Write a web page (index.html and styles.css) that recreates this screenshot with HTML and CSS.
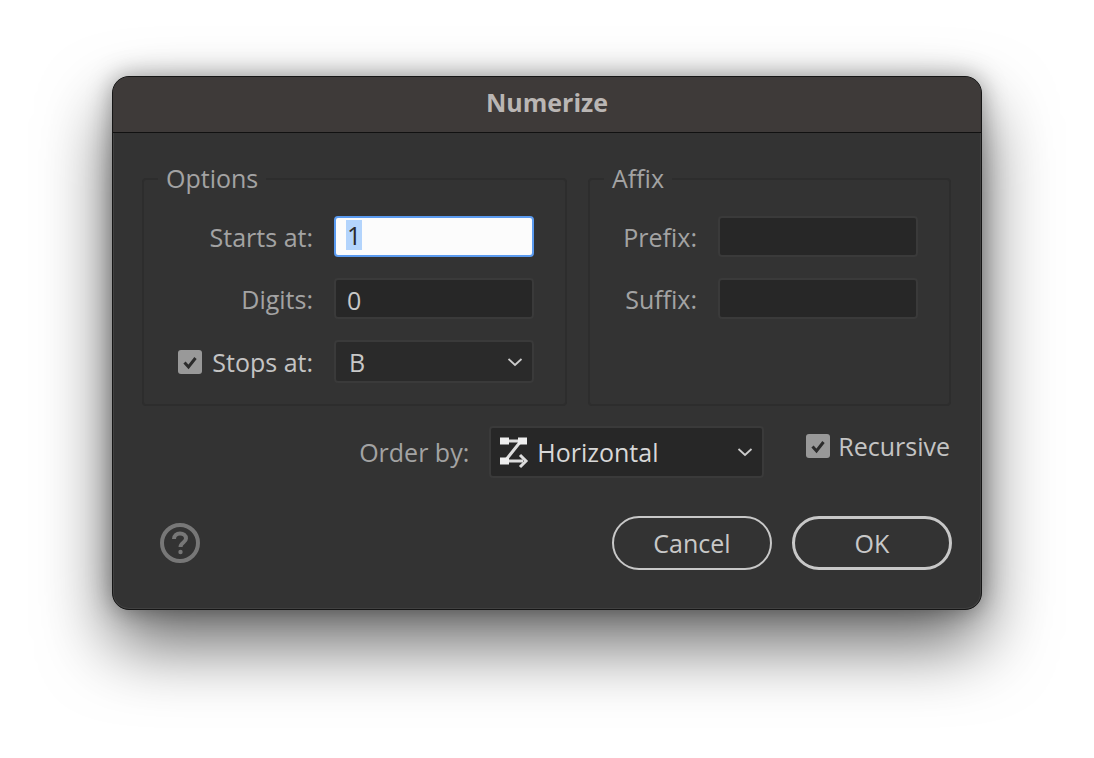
FILE: index.html
```html
<!DOCTYPE html>
<html lang="en">
<head>
    <meta charset="UTF-8">
    <meta name="viewport" content="width=device-width, initial-scale=1.0">
    <title>Numerize</title>
    <link rel="stylesheet" href="styles.css">
</head>
<body>
    <div class="janela">
        <div class="titulo">Numerize</div>
        <div class="corpo">
            <div class="grupos">
                <fieldset class="grupo grupo-opcoes">
                    <legend>Options</legend>
                    <div class="linha">
                        <label>Starts at:</label>
                        <div class="campo campo-ativo"><span class="selecao">1</span></div>
                    </div>
                    <div class="linha">
                        <label>Digits:</label>
                        <div class="campo">0</div>
                    </div>
                    <div class="linha linha-select">
                        <label class="label-check">
                            <svg class="check" viewBox="0 0 24 24"><path d="M6.500 12.500l4 4.500 7-9"/></svg>
                            Stops at:
                        </label>
                        <div class="campo campo-select">
                            <span>B</span>
                            <svg class="seta" viewBox="0 0 16 10"><path d="M1.500 2l6.500 6 6.500-6"/></svg>
                        </div>
                    </div>
                </fieldset>
                <fieldset class="grupo grupo-afixo">
                    <legend>Affix</legend>
                    <div class="linha">
                        <label>Prefix:</label>
                        <div class="campo"></div>
                    </div>
                    <div class="linha">
                        <label>Suffix:</label>
                        <div class="campo"></div>
                    </div>
                </fieldset>
            </div>

            <div class="ordem">
                <label>Order by:</label>
                <div class="campo campo-ordem">
                    <svg class="icone-ordem" viewBox="0 0 30 32">
                        <path class="traco" d="M5 4h20M22 4L6 24h18"/>
                        <path class="traco" d="M21 18l6 6-6 6"/>
                        <rect x="1" y="0.500" width="9" height="7"/>
                        <rect x="19" y="0.500" width="9" height="7"/>
                        <rect x="1" y="20.500" width="9" height="7"/>
                    </svg>
                    <span>Horizontal</span>
                    <svg class="seta" viewBox="0 0 16 10"><path d="M1.500 2l6.500 6 6.500-6"/></svg>
                </div>
                <div class="recursivo">
                    <svg class="check" viewBox="0 0 24 24"><path d="M6.500 12.500l4 4.500 7-9"/></svg>
                    Recursive
                </div>
            </div>

            <div class="rodape">
                <svg class="ajuda" viewBox="0 0 40 40">
                    <circle cx="20" cy="20" r="18"/>
                    <path d="M14 16c0-3.500 2.600-5.500 6-5.500s6 2 6 5c0 4-5.500 4-5.500 8.500"/>
                    <circle class="ponto" cx="20.500" cy="29" r="2.200"/>
                </svg>
                <div class="botoes">
                    <button class="botao">Cancel</button>
                    <button class="botao botao-ok">OK</button>
                </div>
            </div>
        </div>
    </div>
</body>
</html>
```

FILE: styles.css
```css
html,
body {
    height: 100%;
}

body {
    margin: 0;
    background: #fff;
    font-family: "Open Sans", "Noto Sans", sans-serif;
    font-size: 25px;
    color: #a3a3a3;
    overflow: hidden;
}

.janela {
    box-sizing: border-box;
    width: 870px;
    height: 534px;
    margin: 76px 0 0 112px;
    background: #333;
    border: 1px solid #161616;
    border-radius: 17px;
    box-shadow:
        inset 0 0 0 1px rgba(255, 255, 255, 0.07),
        0 34px 70px rgba(0, 0, 0, 0.6),
        0 0 24px rgba(0, 0, 0, 0.35);
    overflow: hidden;
}

.titulo {
    height: 56px;
    box-sizing: border-box;
    background: #3e3a39;
    border-bottom: 1px solid #111;
    color: #bab6b4;
    font-size: 25px;
    font-weight: 700;
    line-height: 50px;
    text-align: center;
}

.corpo {
    padding: 29px 29px 0 29px;
}

.grupos {
    display: flex;
    gap: 21px;
}

.grupo {
    box-sizing: border-box;
    margin: 0;
    height: 244px;
    padding: 20px 31px 0 0;
    border: 2px solid #2d2d2d;
    border-radius: 4px;
    display: flex;
    flex-direction: column;
    gap: 21px;
}

.grupo legend {
    margin-left: 14px;
    padding: 0 8px 2px;
    line-height: 32px;
    color: #a3a3a3;
}

.grupo-opcoes {
    width: 425px;
}

.grupo-afixo {
    width: 363px;
}

.linha {
    display: flex;
    justify-content: flex-end;
    align-items: center;
    gap: 21px;
}

.linha label {
    display: flex;
    align-items: center;
    gap: 10px;
}

.label-check {
    color: #c4c4c4;
}

.campo {
    box-sizing: border-box;
    width: 200px;
    height: 41px;
    padding: 0 11px;
    background: #272727;
    border: 2px solid #3a3a3a;
    border-radius: 4px;
    color: #c8c8c8;
    line-height: 40px;
}

.campo-ativo {
    background: #fcfcfc;
    border-color: #5b9bf0;
    color: #2a2a2a;
}

.selecao {
    display: inline-block;
    height: 30px;
    line-height: 31px;
    vertical-align: 3px;
    padding: 0 1px;
    margin-left: -1px;
    background: #b3d4fc;
}

.campo-select {
    height: 43px;
    display: flex;
    justify-content: space-between;
    align-items: center;
    padding: 0 9px 0 13px;
    background: #2a2a2a;
}

.seta {
    width: 16px;
    height: 10px;
    fill: none;
    stroke: #ccc;
    stroke-width: 1.800;
}

.check {
    width: 24px;
    height: 24px;
    flex: none;
    border-radius: 3px;
    background: #999;
    fill: none;
    stroke: #2c2c2c;
    stroke-width: 3;
}

.ordem {
    display: flex;
    justify-content: flex-end;
    align-items: center;
    margin-top: 20px;
    padding-right: 2px;
}

.campo-ordem {
    display: flex;
    align-items: center;
    gap: 8px;
    width: 275px;
    height: 52px;
    margin-left: 20px;
    padding: 0 9px 0 8px;
    color: #d8d8d8;
}

.campo-ordem .seta {
    margin-left: auto;
}

.icone-ordem {
    width: 30px;
    height: 32px;
    flex: none;
    margin-top: 2px;
    fill: #eee;
}

.traco {
    fill: none;
    stroke: #ddd;
    stroke-width: 3;
}

.recursivo {
    display: flex;
    align-items: center;
    gap: 8px;
    margin-left: 42px;
    margin-top: -12px;
    color: #c4c4c4;
}

.rodape {
    display: flex;
    justify-content: space-between;
    align-items: center;
    margin-top: 38px;
    padding-left: 18px;
}

.ajuda {
    width: 40px;
    height: 40px;
    fill: none;
    stroke: #777;
    stroke-width: 4;
}

.ajuda .ponto {
    fill: #777;
    stroke: none;
}

.botoes {
    display: flex;
    gap: 20px;
}

.botao {
    box-sizing: border-box;
    width: 160px;
    height: 54px;
    background: transparent;
    border: 2px solid #c8c8c8;
    border-radius: 27px;
    color: #c8c8c8;
    font: inherit;
}

.botao-ok {
    border-width: 3px;
}
```
